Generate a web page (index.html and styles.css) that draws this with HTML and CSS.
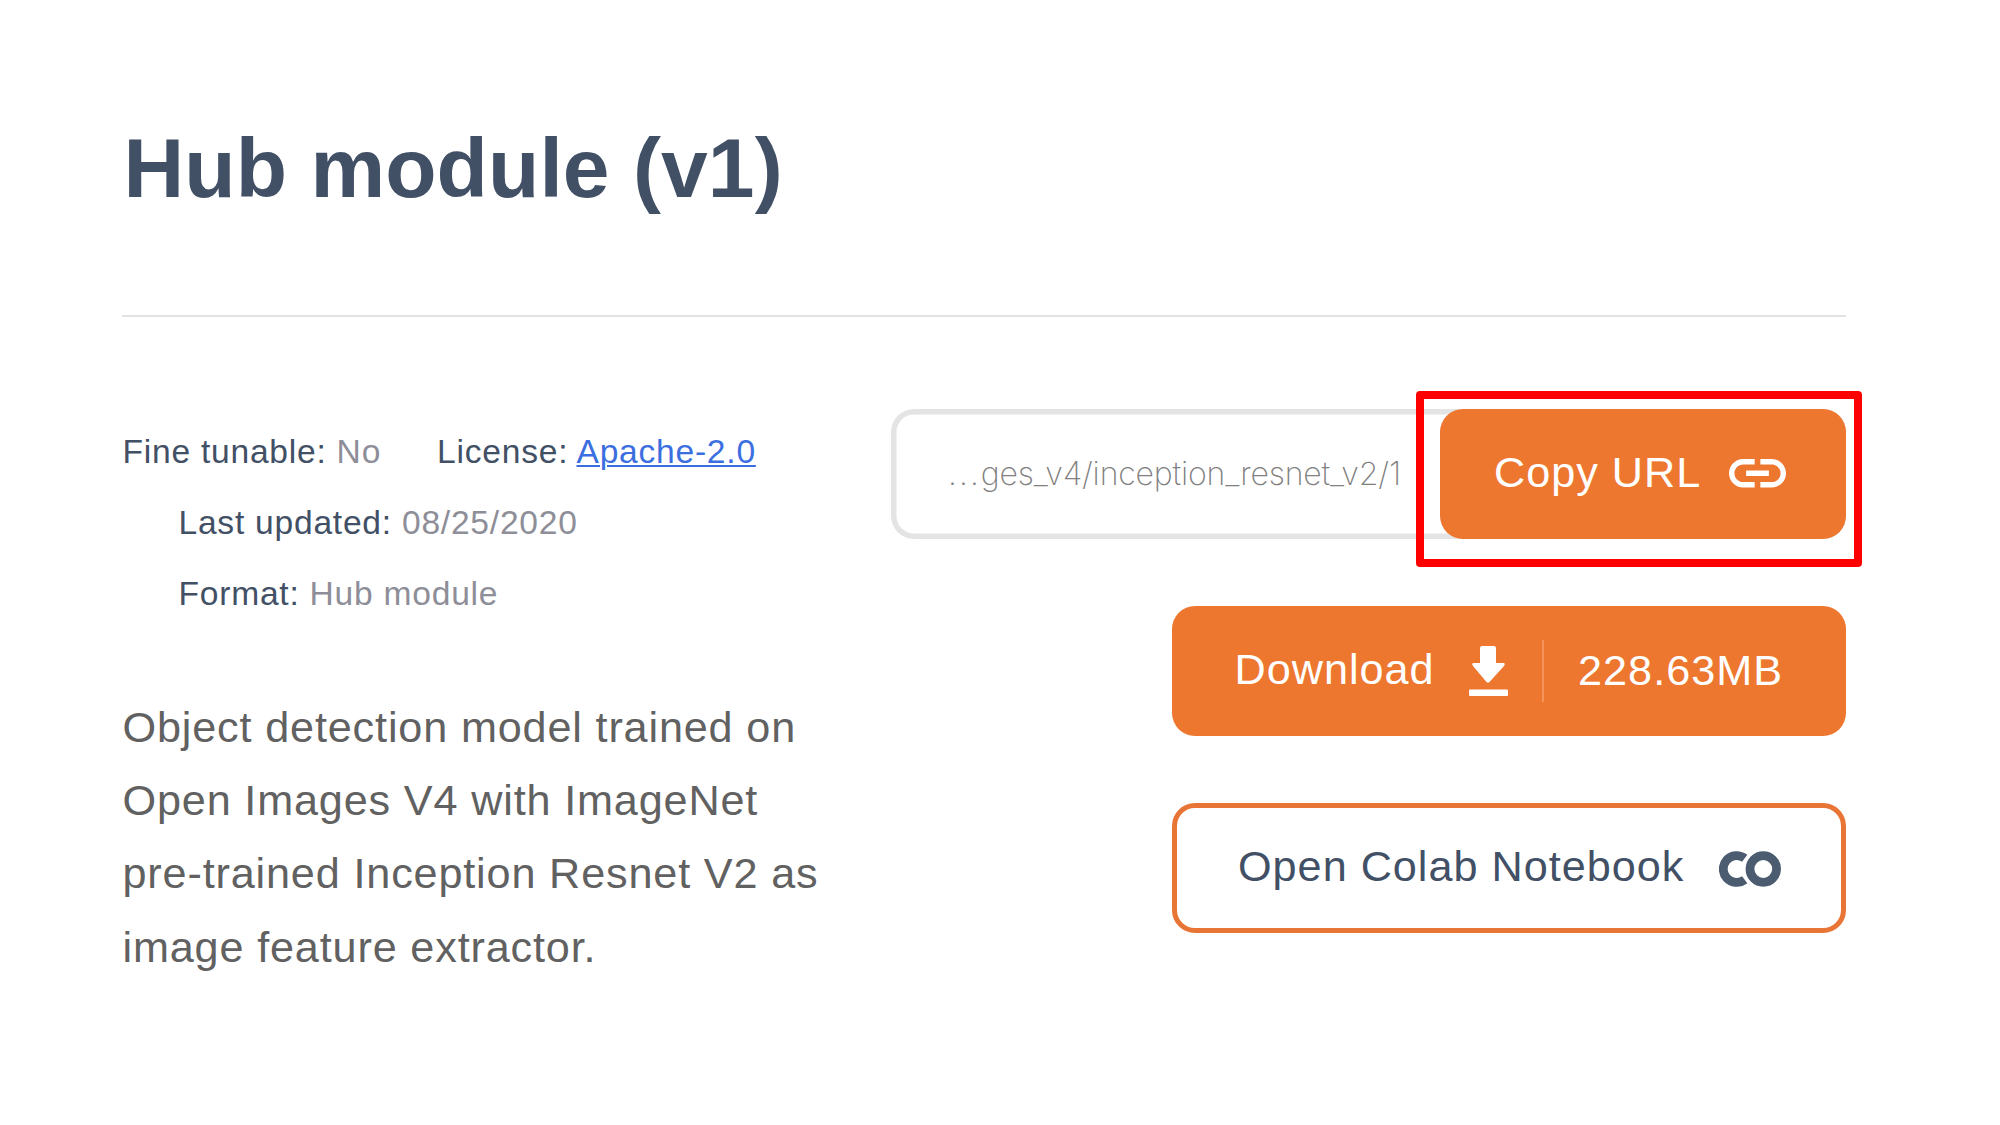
FILE: index.html
```html
<!DOCTYPE html>
<html lang="en">
<head>
<meta charset="utf-8">
<title>Hub module (v1)</title>
<link rel="stylesheet" href="styles.css">
</head>
<body>
<main class="page">
  <h1 class="title">Hub module (v1)</h1>
  <div class="columns">
    <section class="info">
      <div class="meta">
        <div class="meta-row"><span><b>Fine tunable:</b> No</span><span><b>License:</b> <a href="#">Apache-2.0</a></span></div>
        <div class="meta-row indent"><span><b>Last updated:</b> 08/25/2020</span></div>
        <div class="meta-row indent"><span><b>Format:</b> Hub module</span></div>
      </div>
      <p class="description">Object detection model trained on<br>Open Images V4 with ImageNet<br>pre-trained Inception Resnet V2 as<br>image feature extractor.</p>
    </section>
    <section class="actions">
      <div class="url-field">
        <span class="url-text"><span class="dots">...</span>ges_v4/inception_resnet_v2/1</span>
        <button class="button copy"><span class="label">Copy URL</span>
          <svg class="link-icon" viewBox="2 7 20 10"><path d="M3.9 12c0-1.71 1.39-3.1 3.1-3.1h4V7H7c-2.76 0-5 2.24-5 5s2.24 5 5 5h4v-1.9H7c-1.71 0-3.1-1.39-3.1-3.1zM8 13h8v-2H8v2zm9-6h-4v1.9h4c1.71 0 3.1 1.39 3.1 3.1s-1.39 3.1-3.1 3.1h-4V17h4c2.76 0 5-2.24 5-5s-2.24-5-5-5z"/></svg>
        </button>
        <div class="highlight"></div>
      </div>
      <button class="button download"><span class="label">Download</span>
        <svg class="download-icon" viewBox="0 0 40 52"><path d="M13 1h12q2 0 2 2v15h7q3 0 1 3L20.500 37q-1.500 1.500-3 0L4 21q-2-3 1-3H11V3q0-2 2-2z"/><rect x="0" y="44.500" width="39" height="6.500" rx="1"/></svg>
        <span class="size">228.63MB</span>
      </button>
      <button class="button colab"><span class="label">Open Colab Notebook</span>
        <svg class="colab-icon" viewBox="0 0 62 38"><path d="M25.700 8.300A13.400 13.400 0 1 0 25.700 29.700"/><circle cx="44.300" cy="19" r="13.300"/></svg>
      </button>
    </section>
  </div>
</main>
</body>
</html>
```
FILE: styles.css
```css
* { box-sizing: border-box; }
body {
  margin: 0;
  background: #fff;
  font-family: "Liberation Sans", Arial, sans-serif;
}
.page {
  width: 2000px;
  height: 1125px;
  padding: 118px 154px 0 122px;
  overflow: hidden;
}
.title {
  margin: 0;
  height: 199px;
  padding-left: 1.500px;
  border-bottom: 2px solid #e2e2e2;
  color: #425066;
  font-size: 84px;
  line-height: 100px;
  font-weight: 700;
  letter-spacing: 0.080px;
}
.columns {
  display: flex;
  justify-content: space-between;
  padding-top: 91.5px;
}
.info { padding-top: 7px; }
.meta {
  padding-left: 0.500px;
  color: #8e8e99;
  font-size: 33.600px;
  line-height: 71.300px;
  letter-spacing: 0.760px;
  white-space: nowrap;
}
.meta b { color: #425066; font-weight: 400; }
.meta a {
  color: #3b6fe0;
  text-decoration-thickness: 2px;
  text-underline-offset: 2px;
}
.meta-row { display: flex; gap: 56px; }
.indent { padding-left: 56px; }
.description {
  margin: 61.700px 0 0;
  padding-left: 0.500px;
  color: #616161;
  font-size: 43.200px;
  line-height: 73.200px;
  letter-spacing: 0.840px;
  white-space: nowrap;
}
.actions {
  display: flex;
  flex-direction: column;
  align-items: flex-end;
  gap: 67px;
}
.url-field {
  position: relative;
  display: flex;
  align-items: center;
  justify-content: space-between;
  width: 955px;
  height: 130px;
  padding-left: 57px;
  border-radius: 23px;
  box-shadow: inset 0 0 0 5.500px #e4e4e4;
}
.url-text {
  color: #808080;
  font-family: Inter, sans-serif;
  font-size: 32px;
  font-weight: 200;
  letter-spacing: -0.170px;
}
.dots { letter-spacing: 2.100px; }
.button {
  display: flex;
  align-items: center;
  height: 130px;
  padding: 0;
  border: 0;
  border-radius: 23px;
  background: #ee7730;
  color: #fff;
  font: 400 43.200px "Liberation Sans", Arial, sans-serif;
  letter-spacing: 1px;
  white-space: nowrap;
}
.button svg { fill: currentColor; flex: none; }
.label { padding-bottom: 3px; }
.copy { width: 406px; padding-left: 54px; }
.link-icon { width: 57px; height: 28.500px; margin-left: 28px; }
.download { width: 674px; padding-left: 62.500px; }
.download-icon { width: 40px; height: 52px; margin-left: 34px; }
.size {
  display: flex;
  align-items: center;
  height: 62px;
  margin-left: 33.500px;
  padding-left: 34px;
  border-left: 2px solid #f4935a;
}
.colab {
  width: 674px;
  padding-left: 61px;
  border: 5px solid #e87536;
  background: #fff;
  color: #425066;
}
.button .colab-icon {
  width: 62px;
  height: 38px;
  margin: 3px 0 0 35px;
  fill: none;
  stroke: #4c5c70;
  stroke-width: 8.800px;
}
.highlight {
  position: absolute;
  top: -17.500px;
  right: -16px;
  width: 446px;
  height: 176px;
  border: 8px solid #ff0000;
  border-radius: 4px;
}
```
